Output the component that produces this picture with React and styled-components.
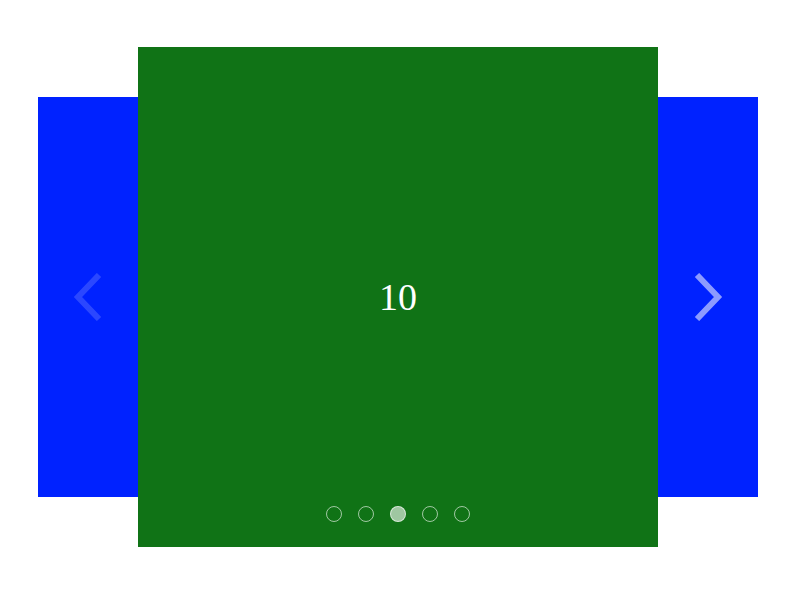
import React from 'react';
import styled, { createGlobalStyle } from 'styled-components';

const GlobalStyle = createGlobalStyle`
	body {
		margin: 0;
		background: #ffffff;
		font-family: 'Liberation Serif', 'Times New Roman', serif;
	}
`;

const Stage = styled.div`
	display: flex;
	align-items: center;
	padding: 47px 36px 47px 38px;
`;

const Peek = styled.div`
	width: 100px;
	height: 400px;
	background: #0022ff;
	display: flex;
	align-items: center;
	justify-content: ${(p) => (p.side === 'left' ? 'flex-end' : 'flex-start')};
`;

const Arrow = styled.button`
	border: 0;
	padding: 0;
	background: none;
	display: flex;
	cursor: pointer;
	margin: ${(p) => (p.side === 'left' ? '0 36px 0 0' : '0 0 0 36px')};
	opacity: ${(p) => (p.disabled ? 0.17 : 0.55)};
`;

const Slide = styled.div`
	position: relative;
	width: 520px;
	height: 500px;
	background: #107316;
	display: flex;
	align-items: center;
	justify-content: center;
`;

const Label = styled.span`
	color: #ffffff;
	font-size: 38px;
	line-height: 1;
`;

const Dots = styled.div`
	position: absolute;
	left: 0;
	right: 0;
	bottom: 25px;
	display: flex;
	justify-content: center;
	gap: 16px;
`;

const Dot = styled.span`
	width: 14px;
	height: 14px;
	border-radius: 50%;
	border: 1px solid rgba(255, 255, 255, 0.6);
	background: ${(p) => (p.active ? 'rgba(255, 255, 255, 0.6)' : 'transparent')};
`;

const slides = [8, 9, 10, 11, 12];

export default function App() {
	const current = 2;

	return (
		<>
			<GlobalStyle />
			<Stage>
				<Peek side="left">
					<Arrow side="left" disabled>
						<svg width="30" height="48" viewBox="0 0 30 48">
							<polyline points="27,2 6,24 27,46" fill="none" stroke="#fff" strokeWidth="6" />
						</svg>
					</Arrow>
				</Peek>
				<Slide>
					<Label>{slides[current]}</Label>
					<Dots>
						{slides.map((s, i) => (
							<Dot key={s} active={i === current} />
						))}
					</Dots>
				</Slide>
				<Peek side="right">
					<Arrow side="right">
						<svg width="30" height="48" viewBox="0 0 30 48">
							<polyline points="3,2 24,24 3,46" fill="none" stroke="#fff" strokeWidth="6" />
						</svg>
					</Arrow>
				</Peek>
			</Stage>
		</>
	);
}
